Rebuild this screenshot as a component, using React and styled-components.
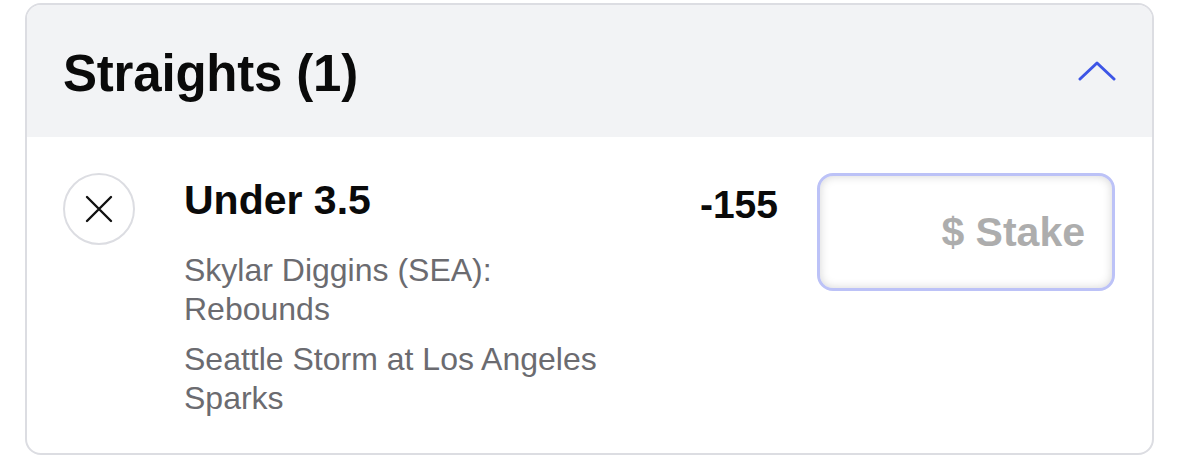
import styled, { createGlobalStyle } from "styled-components";

const GlobalStyle = createGlobalStyle`
  body {
    margin: 0;
    background: #ffffff;
    font-family: "Liberation Sans", Arial, sans-serif;
  }
`;

export default function App() {
  return (
    <>
      <GlobalStyle />
      <Page>
        <Card>
          <Header>
            <Title>Straights (1)</Title>
            <Chevron viewBox="0 0 38 20">
              <polyline points="2,18 19,2 36,18" />
            </Chevron>
          </Header>
          <Body>
            <CloseButton aria-label="remove">
              <svg width="28" height="28" viewBox="0 0 28 28">
                <path d="M2 2 L26 26 M26 2 L2 26" stroke="#111" strokeWidth="2.4" strokeLinecap="round" />
              </svg>
            </CloseButton>
            <Info>
              <Selection>Under 3.5</Selection>
              <Detail>Skylar Diggins (SEA): Rebounds</Detail>
              <Detail>Seattle Storm at Los Angeles Sparks</Detail>
            </Info>
            <Odds>-155</Odds>
            <StakeInput placeholder="$ Stake" />
          </Body>
        </Card>
      </Page>
    </>
  );
}

const Page = styled.div`
  padding: 3px 25px 0 25px;
`;

const Card = styled.div`
  width: 1129px;
  height: 452px;
  box-sizing: border-box;
  border: 2px solid #dcdde2;
  border-radius: 16px;
  overflow: hidden;
  background: #ffffff;
`;

const Header = styled.div`
  height: 132px;
  background: #f2f3f5;
  display: flex;
  align-items: center;
  justify-content: space-between;
  padding: 0 36px 0 36px;
`;

const Title = styled.h2`
  margin: 0 0 0 0;
  padding-top: 4px;
  font-size: 51px;
  font-weight: 700;
  color: #0a0a0a;
  letter-spacing: -0.2px;
`;

const Chevron = styled.svg`
  width: 38px;
  height: 20px;
  margin-bottom: 1px;
  fill: none;
  stroke: #3d55e6;
  stroke-width: 3;
  stroke-linecap: round;
  stroke-linejoin: round;
`;

const Body = styled.div`
  display: flex;
  align-items: flex-start;
  padding: 36px 37px 0 36px;
`;

const CloseButton = styled.button`
  width: 72px;
  height: 72px;
  flex-shrink: 0;
  border: 2px solid #dcdde2;
  border-radius: 50%;
  background: #ffffff;
  display: flex;
  align-items: center;
  justify-content: center;
  padding: 0;
`;

const Info = styled.div`
  width: 440px;
  margin-left: 49px;
  display: flex;
  flex-direction: column;
`;

const Selection = styled.div`
  font-size: 41px;
  font-weight: 700;
  line-height: 48px;
  color: #0a0a0a;
  margin-top: 3px;
  margin-bottom: 27px;
`;

const Detail = styled.div`
  font-size: 32px;
  line-height: 39px;
  color: #6b6b70;
  margin-bottom: 11px;
`;

const Odds = styled.div`
  margin-left: auto;
  margin-top: 8px;
  font-size: 39px;
  font-weight: 700;
  line-height: 48px;
  color: #0a0a0a;
`;

const StakeInput = styled.input`
  width: 298px;
  height: 118px;
  margin-left: 39px;
  box-sizing: border-box;
  border: 3px solid #bcc2f7;
  border-radius: 16px;
  background: #ffffff;
  box-shadow: inset 0 0 10px rgba(0, 0, 0, 0.17);
  padding: 0 27px 0 26px;
  text-align: right;
  font-family: "Liberation Sans", Arial, sans-serif;
  font-size: 41px;
  font-weight: 700;
  outline: none;

  &::placeholder {
    color: #adadad;
  }
`;
